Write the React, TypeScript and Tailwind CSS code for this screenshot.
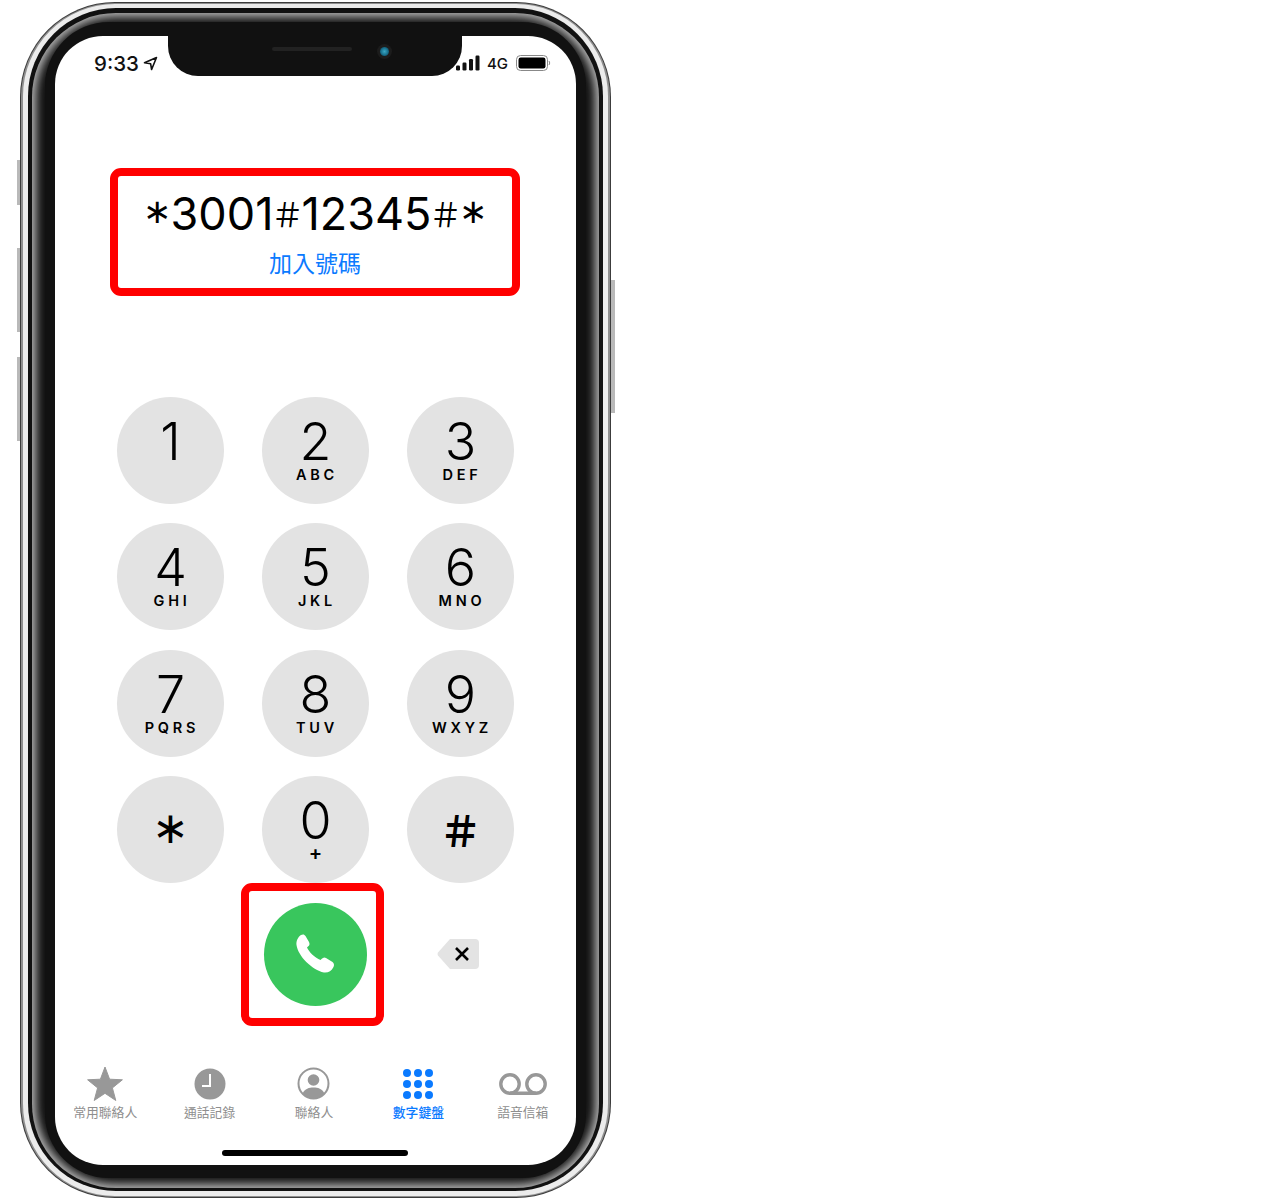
/* ── iPhone dialer screenshot ── */

const KEYS = [
  ["1", ""], ["2", "ABC"], ["3", "DEF"],
  ["4", "GHI"], ["5", "JKL"], ["6", "MNO"],
  ["7", "PQRS"], ["8", "TUV"], ["9", "WXYZ"],
];

const FONT = "font-['Inter','Liberation_Sans',sans-serif]";
const CJK = "font-['Noto_Sans_CJK_TC','Noto_Sans_CJK_SC',sans-serif]";

function StarIcon() {
  return (
    <svg width="36" height="34" viewBox="0 0 36 34" fill="#989898">
      <path d="M18 0 L22.6 12.2 L35.4 12.8 L25.4 20.9 L28.8 33.5 L18 26.3 L7.2 33.5 L10.6 20.9 L0.6 12.8 L13.4 12.2 Z" stroke="#989898" strokeLinejoin="round" />
    </svg>
  );
}

function ClockIcon() {
  return (
    <svg width="32" height="32" viewBox="0 0 32 32">
      <circle cx="16" cy="16" r="15.5" fill="#989898" />
      <path d="M16 6 V18 H8" fill="none" stroke="#fff" strokeWidth="2" />
    </svg>
  );
}

function PersonIcon() {
  return (
    <svg width="33" height="33" viewBox="0 0 33 33">
      <circle cx="16.5" cy="16.5" r="15" fill="#fff" stroke="#989898" strokeWidth="2" />
      <circle cx="16.5" cy="13" r="5.8" fill="#989898" />
      <path d="M5.5 26.5 C8 21.5 12 20.5 16.5 20.5 C21 20.5 25 21.5 27.5 26.5 C24.5 29.8 20.5 31.5 16.5 31.5 C12.5 31.5 8.5 29.8 5.5 26.5 Z" fill="#989898" />
    </svg>
  );
}

function DotsIcon() {
  return (
    <div className="grid grid-cols-3 gap-x-[3px] gap-y-[3px]">
      {Array.from({ length: 9 }).map((_, i) => (
        <span key={i} className="w-[8px] h-[8px] rounded-full bg-[#0a7aff]" />
      ))}
    </div>
  );
}

function VoicemailIcon() {
  return (
    <svg width="48" height="22" viewBox="0 0 48 22" fill="none" stroke="#989898" strokeWidth="3.4">
      <circle cx="11" cy="11" r="9.2" />
      <circle cx="37" cy="11" r="9.2" />
      <path d="M11 20.2 H37" />
    </svg>
  );
}

function PhoneIcon() {
  return (
    <svg width="39" height="40" viewBox="0 0 39 40" fill="#fff">
      <path d="M5 1 C7 0 8.5 .5 9.5 2 L13 8 C14 10 13.5 11.5 12 12.5 L11 13.5 C13 18 19 24 24.5 26 L25.5 25 C27 23.5 28.5 23 30 24 L36.5 28 C38 29 38.5 31 37.5 33 C35.5 37 32 39 28 38.5 C16 36 2 22 0.5 11 C0 7 2 3 5 1 Z" />
    </svg>
  );
}

function DeleteIcon() {
  return (
    <svg width="42" height="30" viewBox="0 0 42 30">
      <path d="M13 0 H38 Q42 0 42 4 V26 Q42 30 38 30 H13 L1 16.5 Q0 15 1 13.5 Z" fill="#e3e3e3" />
      <path d="M19 9 L31 21 M31 9 L19 21" stroke="#000" strokeWidth="2.6" />
    </svg>
  );
}

function TabItem({ icon, label, active }: { icon: React.ReactNode; label: string; active?: boolean }) {
  return (
    <div className="flex flex-col items-center">
      <div className="h-[36px] flex items-center justify-center">{icon}</div>
      <span className={`${CJK} mt-[1px] text-[12.8px] leading-[18px] whitespace-nowrap ${active ? "text-[#0a7aff] font-medium" : "text-[#8e8e8e]"}`}>
        {label}
      </span>
    </div>
  );
}

function StatusBar() {
  return (
    <div className={`${FONT} h-[40px] flex shrink-0`}>
      <div className="w-[113px] flex items-start pl-[39px] pt-[16px]">
        <span className="text-[20.5px] leading-[23px] font-medium text-[#111]">9:33</span>
        <svg className="ml-[4px] mt-[4px]" width="15" height="15" viewBox="0 0 15 15" fill="none" stroke="#111" strokeWidth="1.6" strokeLinejoin="round">
          <path d="M1.5 6.8 L13.5 1.5 L8.6 13.5 L7.6 7.7 Z" />
        </svg>
      </div>
      <div className="w-[294px] h-[40px] flex bg-[#111] rounded-b-[30px]">
        <span className="ml-[104px] mt-[11px] w-[80px] h-[4px] rounded-full bg-[#222]" />
        <span className="ml-[25px] mt-[8px] w-[15px] h-[15px] rounded-full bg-[#1c1c1c] flex items-center justify-center">
          <span className="w-[9px] h-[9px] rounded-full bg-[radial-gradient(circle,#3ba7c4_0%,#176f8c_55%,#0e3441_100%)]" />
        </span>
      </div>
      <div className="flex items-start pt-[19px] -ml-[6px] relative">
        <svg width="25" height="16" viewBox="0 0 25 16" fill="#111">
          <rect x="0" y="10.5" width="4" height="5" rx="1.2" />
          <rect x="6.5" y="7.5" width="4" height="8" rx="1.2" />
          <rect x="13" y="4" width="4" height="11.5" rx="1.2" />
          <rect x="19.5" y="0.5" width="4" height="15" rx="1.2" />
        </svg>
        <span className="ml-[6px] text-[15px] leading-[18px] font-medium text-[#111]">4G</span>
        <svg className="ml-[8px]" width="35" height="17" viewBox="0 0 35 17">
          <rect x="0.5" y="0.5" width="31" height="15" rx="4" fill="none" stroke="#888" />
          <rect x="2.5" y="2.5" width="27" height="11" rx="2.2" fill="#000" />
          <path d="M33 6 Q34.5 8 33 10" fill="none" stroke="#888" />
        </svg>
      </div>
    </div>
  );
}

function Keypad() {
  return (
    <div className="ml-[62px] mt-[101px] grid grid-cols-[107px_107px_107px] auto-rows-[107px] gap-x-[38px] gap-y-[19.33px]">
      {KEYS.map(([digit, letters]) => (
        <div key={digit} className={`${FONT} rounded-full bg-[#e3e3e3] flex flex-col items-center pt-[20px] text-black`}>
          <span className="text-[52px] leading-[50px] font-[350]">{digit}</span>
          {letters && (
            <span className="mt-[2px] pl-[3px] text-[14.5px] leading-[12px] font-semibold tracking-[0.26em]">{letters}</span>
          )}
        </div>
      ))}
      <div className={`${FONT} rounded-full bg-[#e3e3e3] flex items-center justify-center text-black`}>
        <span className="-translate-y-[2px] text-[44px] leading-[58px] font-light">∗</span>
      </div>
      <div className={`${FONT} rounded-full bg-[#e3e3e3] flex flex-col items-center pt-[20px] text-black`}>
        <span className="text-[52px] leading-[50px] font-[350]">0</span>
        <span className="mt-[2px] text-[20px] leading-[10px] font-semibold">+</span>
      </div>
      <div className={`${CJK} rounded-full bg-[#e3e3e3] flex items-center justify-center text-black`}>
        <span className="text-[42px] leading-[58px] font-semibold">＃</span>
      </div>
    </div>
  );
}

export default function App() {
  return (
    <div className="w-[1272px] h-[1200px] bg-white flex pl-[17px] pt-[2px] overflow-hidden">
      {/* side buttons */}
      <div className="w-[3px] flex flex-col shrink-0">
        <span className="mt-[158px] h-[45px] bg-[#b9b9b9]" />
        <span className="mt-[43px] h-[84px] bg-[#b9b9b9]" />
        <span className="mt-[25px] h-[84px] bg-[#b9b9b9]" />
      </div>

      {/* body rings */}
      <div className="w-[591px] h-[1196px] shrink-0 rounded-[95px] bg-[#3c3c3c] p-[1px]">
        <div className="h-full rounded-[94px] bg-[#8f8f8f] px-[2px] pt-[1px] pb-[1px]">
          <div className="h-full rounded-[92px] bg-[#ececec] px-[5px] pt-[4px] pb-[5px]">
            <div className="h-full rounded-[88px] bg-[#111] px-[4px] pt-[5px] pb-[3px]">
              <div className="h-full rounded-[84px] bg-[#111] px-[13px] pt-[9px] pb-[10px] shadow-[inset_0_0_10px_4px_#b8b8b8]">
                <div className="h-full rounded-[64px] bg-[#111] px-[10px] pt-[14px] pb-[13px]">
                  {/* screen */}
                  <div className="h-full rounded-[48px] bg-white overflow-hidden flex flex-col">
                    <StatusBar />

                    <div className="ml-[55px] mt-[92px] w-[410px] h-[128px] shrink-0 border-[8px] border-[#ff0000] rounded-[11px] flex flex-col items-center">
                      <div className={`${FONT} mt-[8px] h-[60px] flex items-baseline text-[45px] leading-[60px] text-black whitespace-nowrap`}>
                        <span className="-translate-y-[7px] text-[34px]">∗</span>
                        <span>3001</span>
                        <span className={`${CJK} -mx-[2.5px] text-[33px] leading-[60px] -translate-y-[3px]`}>＃</span>
                        <span>12345</span>
                        <span className={`${CJK} -mx-[2.5px] text-[33px] leading-[60px] -translate-y-[3px]`}>＃</span>
                        <span className="-translate-y-[7px] text-[34px]">∗</span>
                      </div>
                      <span className={`${CJK} mt-[3px] text-[23px] leading-[30px] text-[#0a7aff]`}>加入號碼</span>
                    </div>

                    <Keypad />

                    <div className="flex shrink-0">
                      <div className="ml-[186px] w-[143px] h-[143px] border-[8px] border-[#ff0000] rounded-[11px] flex items-center">
                        <div className="ml-[14.5px] w-[103px] h-[103px] rounded-full bg-[#39c65d] flex items-center justify-center">
                          <PhoneIcon />
                        </div>
                      </div>
                      <div className="ml-[53px] flex items-center">
                        <DeleteIcon />
                      </div>
                    </div>

                    <div className="mt-[40px] -ml-[2px] w-[522px] grid grid-cols-5 shrink-0">
                      <TabItem icon={<StarIcon />} label="常用聯絡人" />
                      <TabItem icon={<ClockIcon />} label="通話記錄" />
                      <TabItem icon={<PersonIcon />} label="聯絡人" />
                      <TabItem icon={<DotsIcon />} label="數字鍵盤" active />
                      <TabItem icon={<VoicemailIcon />} label="語音信箱" />
                    </div>

                    <div className="mt-auto mb-[9px] ml-[167px] w-[186px] h-[6px] rounded-full bg-black shrink-0" />
                  </div>
                </div>
              </div>
            </div>
          </div>
        </div>
      </div>

      <div className="w-[4px] flex flex-col shrink-0">
        <span className="mt-[278px] h-[133px] bg-[#b9b9b9]" />
      </div>
    </div>
  );
}
